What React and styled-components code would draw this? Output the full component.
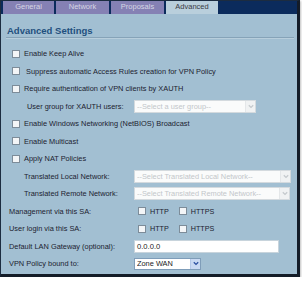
import React from 'react';
import styled, { createGlobalStyle } from 'styled-components';

const GlobalStyle = createGlobalStyle`
  html, body {
    margin: 0;
    padding: 0;
    background: #ffffff;
  }
  body {
    font-family: 'Liberation Sans', Arial, sans-serif;
  }
`;

const Frame = styled.div`
  width: 296px;
  height: 273px;
  border-top: 1px solid #1c2c40;
  border-left: 1px solid #1c2c40;
  border-right: 3px solid #141c28;
  border-bottom: 3px solid #141c28;
  background: #a2bfd2;
  box-shadow: 1px 1px 2px rgba(0, 0, 0, 0.25);
  display: flex;
  flex-direction: column;
  overflow: hidden;
`;

const TabBar = styled.div`
  height: 13px;
  background: #0b2b5c;
  display: flex;
  gap: 2px;
  padding-left: 2px;
`;

const Tab = styled.div`
  width: ${(p) => p.$w}px;
  height: 13px;
  background: ${(p) => (p.$active ? '#b9cfdc' : '#8581b4')};
  color: ${(p) => (p.$active ? '#3a3a44' : '#d6d6e4')};
  font-size: 7.5px;
  line-height: 12px;
  text-align: center;
`;

const Content = styled.div`
  padding: 12px 3px 0 5px;
`;

const Heading = styled.div`
  font-size: 9.5px;
  font-weight: bold;
  color: #1f4f7e;
  line-height: 10px;
  padding: 0 0 1px 1px;
  border-bottom: 1px solid #86a3b8;
  box-shadow: 0 1px 0 #b8cedc;
  margin-bottom: 7px;
`;

const Row = styled.div`
  height: 17.5px;
  display: flex;
  align-items: center;
  padding-left: ${(p) => p.$indent || 0}px;
  font-size: 7.4px;
  color: #1c2230;
  white-space: nowrap;
`;

const Label = styled.span`
  width: ${(p) => p.$w}px;
  flex: none;
`;

const Box = styled.span`
  width: 6px;
  height: 6px;
  flex: none;
  border: 1px solid #7d8c99;
  background: #f3f5f7;
  margin-right: ${(p) => p.$gap || 4}px;
`;

const Select = styled.div`
  width: ${(p) => p.$w}px;
  height: ${(p) => p.$h || 13}px;
  box-sizing: border-box;
  border: 1px solid ${(p) => (p.$disabled ? '#d4dade' : '#7f9db9')};
  background: ${(p) => (p.$disabled ? '#fafbfb' : '#ffffff')};
  color: ${(p) => (p.$disabled ? '#c2c6ca' : '#1a1a1a')};
  display: flex;
  align-items: center;
  padding-left: 2px;
  font-size: 7.4px;
`;

const SelectText = styled.span`
  flex: 1;
  overflow: hidden;
`;

const Arrow = styled.span`
  width: 9px;
  height: 100%;
  display: flex;
  align-items: center;
  justify-content: center;
  background: ${(p) => (p.$disabled ? '#f0f2f3' : '#c9d9f2')};
  border-left: 1px solid ${(p) => (p.$disabled ? '#e4e7e9' : '#b4c8e8')};
`;

const TextInput = styled.div`
  width: 145px;
  height: 13px;
  box-sizing: border-box;
  border: 1px solid #c8d4dc;
  background: #ffffff;
  color: #1a1a1a;
  font-size: 7.6px;
  padding-left: 2px;
  display: flex;
  align-items: center;
`;

const Opt = styled.span`
  display: flex;
  align-items: center;
  margin-right: 10px;
  font-size: 7.2px;
`;

const Chevron = ({ color }) => (
  <svg width="6" height="5" viewBox="0 0 6 5">
    <path d="M0.8 1.2 L3 3.4 L5.2 1.2" fill="none" stroke={color} strokeWidth="1.3" />
  </svg>
);

const Dropdown = ({ w, h, text, disabled }) => (
  <Select $w={w} $h={h} $disabled={disabled}>
    <SelectText>{text}</SelectText>
    <Arrow $disabled={disabled}>
      <Chevron color={disabled ? '#c4c9cd' : '#2b4fa0'} />
    </Arrow>
  </Select>
);

const Check = ({ children, indent = 6, gap }) => (
  <Row $indent={indent}>
    <Box $gap={gap} />
    {children}
  </Row>
);

const HttpOptions = () => (
  <>
    <Opt><Box />HTTP</Opt>
    <Opt><Box />HTTPS</Opt>
  </>
);

export default function App() {
  return (
    <>
      <GlobalStyle />
      <Frame>
        <TabBar>
          <Tab $w={51}>General</Tab>
          <Tab $w={53}>Network</Tab>
          <Tab $w={53}>Proposals</Tab>
          <Tab $w={52} $active>Advanced</Tab>
        </TabBar>
        <Content>
          <Heading>Advanced Settings</Heading>
          <Check>Enable Keep Alive</Check>
          <Check gap={6}>Suppress automatic Access Rules creation for VPN Policy</Check>
          <Check>Require authentication of VPN clients by XAUTH</Check>
          <Row $indent={21}>
            <Label $w={107}>User group for XAUTH users:</Label>
            <Dropdown w={122} text="--Select a user group--" disabled />
          </Row>
          <Check>Enable Windows Networking (NetBIOS) Broadcast</Check>
          <Check>Enable Multicast</Check>
          <Check>Apply NAT Policies</Check>
          <Row $indent={18}>
            <Label $w={110}>Translated Local Network:</Label>
            <Dropdown w={157} text="--Select Translated Local Network--" disabled />
          </Row>
          <Row $indent={18}>
            <Label $w={110}>Translated Remote Network:</Label>
            <Dropdown w={156} text="--Select Translated Remote Network--" disabled />
          </Row>
          <Row $indent={3}>
            <Label $w={129}>Management via this SA:</Label>
            <HttpOptions />
          </Row>
          <Row $indent={3}>
            <Label $w={129}>User login via this SA:</Label>
            <HttpOptions />
          </Row>
          <Row $indent={3}>
            <Label $w={125}>Default LAN Gateway (optional):</Label>
            <TextInput>0.0.0.0</TextInput>
          </Row>
          <Row $indent={3}>
            <Label $w={125}>VPN Policy bound to:</Label>
            <Dropdown w={67} h={12} text="Zone WAN" />
          </Row>
        </Content>
      </Frame>
    </>
  );
}
